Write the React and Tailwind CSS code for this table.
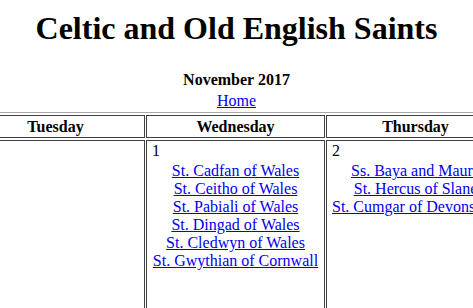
import React from 'react';

const days = ['Sunday', 'Monday', 'Tuesday', 'Wednesday', 'Thursday', 'Friday', 'Saturday'];

const week = [
  null,
  null,
  null,
  {
    date: 1,
    saints: [
      'St. Cadfan of Wales',
      'St. Ceitho of Wales',
      'St. Pabiali of Wales',
      'St. Dingad of Wales',
      'St. Cledwyn of Wales',
      'St. Gwythian of Cornwall',
    ],
  },
  {
    date: 2,
    saints: ['Ss. Baya and Maura', 'St. Hercus of Slane', 'St. Cumgar of Devonshire'],
  },
  { date: 3, saints: [] },
  { date: 4, saints: [] },
];

const App = () => {
  return (
    <div className="h-screen w-full overflow-hidden bg-white text-black font-['Liberation_Serif',serif]">
      {/* Page title */}
      <h1 className="pt-[10px] text-center text-[32px] leading-[37px] font-bold">
        Celtic and Old English Saints
      </h1>

      <p className="mt-[24px] text-center text-[16px] leading-[18px] font-bold">November 2017</p>
      <p className="mt-[3px] text-center text-[16px] leading-[18px]">
        <a href="#" className="text-[#0000ee] underline">Home</a>
      </p>

      {/* Calendar */}
      <div className="mt-[2px] flex justify-center pr-[2px]">
        <table className="w-[1263px] shrink-0 table-fixed border-separate [border-spacing:1px_2px] border border-t-[#a8a8a8] border-l-[#a8a8a8] border-r-[#5a5a5a] border-b-[#5a5a5a]">
          <thead>
            <tr>
              {days.map(d => (
                <th
                  key={d}
                  className="border border-[#404040] p-[1px] text-center text-[16px] leading-[19px] font-bold"
                >
                  {d}
                </th>
              ))}
            </tr>
          </thead>
          <tbody>
            <tr>
              {week.map((cell, i) => (
                <td
                  key={i}
                  className="h-[220px] border border-[#404040] px-[5px] pt-[1px] align-top text-[16px] leading-[18px]"
                >
                  {cell && (
                    <>
                      <div>{cell.date}</div>
                      <div className="mt-[2px] text-center whitespace-nowrap">
                        {cell.saints.map(s => (
                          <div key={s}>
                            <a href="#" className="text-[#0000ee] underline">{s}</a>
                          </div>
                        ))}
                      </div>
                    </>
                  )}
                </td>
              ))}
            </tr>
          </tbody>
        </table>
      </div>
    </div>
  );
};

export default App;
